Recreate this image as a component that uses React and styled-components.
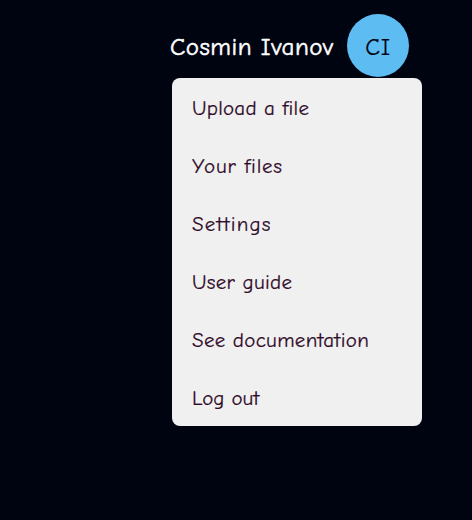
import React from "react";
import styled, { createGlobalStyle } from "styled-components";

const GlobalStyle = createGlobalStyle`
  * { box-sizing: border-box; }
  body { margin: 0; background: #000411; font-family: "Comic Sans MS", "Comic Neue", cursive; font-variant-ligatures: none; }
`;
const Page = styled.main`
  height: 520px;
  padding: 14px 50px 0 170px;
`;
const Header = styled.header`
  display: flex;
  align-items: center;
  justify-content: space-between;
  height: 63px;
  padding-right: 13px;
`;
const Name = styled.span`
  color: #fff;
  font-size: 25px;
  letter-spacing: 0.5px;
  padding-top: 2px;
  -webkit-text-stroke: 0.5px currentColor;
  white-space: nowrap;
`;
const Avatar = styled.div`
  display: grid;
  place-items: center;
  width: 62px;
  height: 63px;
  padding-top: 3px;
  border-radius: 50%;
  background: #5dbcf2;
  color: #000411;
  font-size: 24px;
  letter-spacing: 0.6px;
  -webkit-text-stroke: 0.2px currentColor;
`;
const Menu = styled.nav`
  display: flex;
  flex-direction: column;
  width: 250px;
  margin: 1px 0 0 2px;
  border-radius: 8px;
  background: #f0f0f0;
`;
const Item = styled.a`
  height: 58px;
  padding: 1px 20px 0;
  line-height: 58px;
  color: #2f0a28;
  font-size: 21px;
  letter-spacing: ${(p) => p.$tracking}px;
  -webkit-text-stroke: 0.2px currentColor;
  white-space: nowrap;
`;
const items = [
  ["Upload a file", 0.25],
  ["Your files", 0.8],
  ["Settings", 1.15],
  ["User guide", 0.3],
  ["See documentation", 0.3],
  ["Log out", 0],
];

export default function App() {
  return (
    <Page>
      <GlobalStyle />
      <Header><Name>Cosmin Ivanov</Name><Avatar>CI</Avatar></Header>
      <Menu>{items.map(([label, tracking]) => <Item key={label} $tracking={tracking}>{label}</Item>)}</Menu>
    </Page>
  );
}
